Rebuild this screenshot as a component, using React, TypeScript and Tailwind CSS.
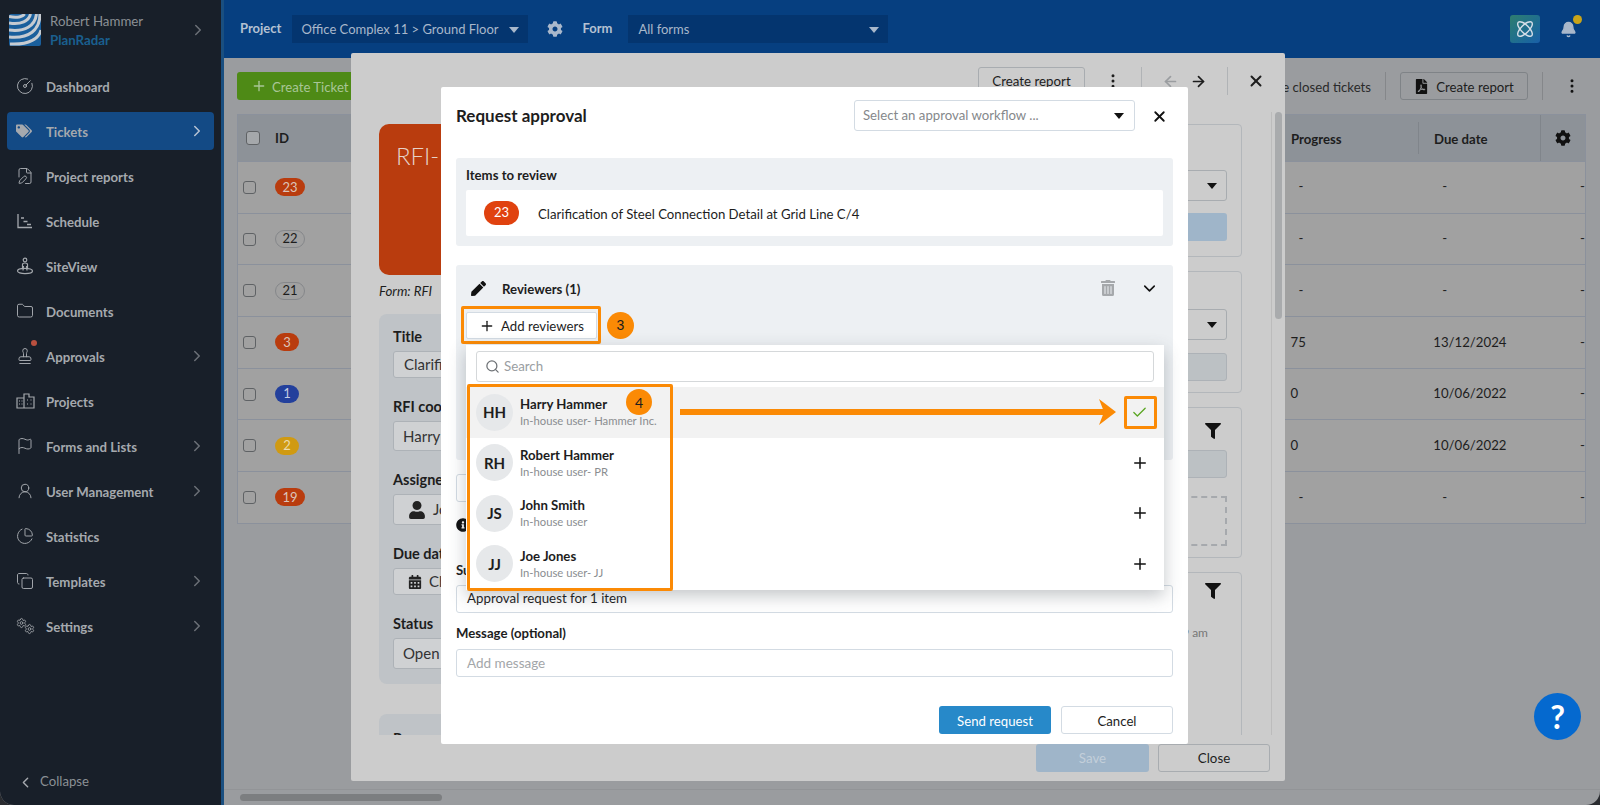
import { ArrowLeft, ArrowRight, Bell, ChartPie, Check, ChevronDown, ChevronLeft, ChevronRight, CircleGauge, Copy, EllipsisVertical, FilePen, Flag, Folder, Plus, Search, Settings, Stamp, UserRound, X } from "lucide-react";
import { FaCalendarAlt, FaCog, FaFilePdf, FaFilter, FaInfoCircle, FaPen, FaTags, FaTrashAlt, FaUser } from "react-icons/fa";

const ScheduleIcon = () => (
  <svg width="18" height="18" viewBox="0 0 18 18" fill="none" stroke="currentColor" strokeWidth="1.3">
    <path d="M2 2v13.5h14" />
    <path d="M5 6h3M7.5 9.5h4M11 12.5h4" />
  </svg>
);

const SiteViewIcon = () => (
  <svg width="18" height="18" viewBox="0 0 18 18" fill="none" stroke="currentColor" strokeWidth="1.2">
    <circle cx="9" cy="3" r="1.8" />
    <path d="M6.5 11V7.5c0-1 1-1.5 2.5-1.5s2.5.5 2.5 1.5V11M7.5 9l-.5 4.5M10.5 9l.5 4.5" />
    <ellipse cx="9" cy="14" rx="7.5" ry="2.6" />
  </svg>
);

const ProjectsIcon = () => (
  <svg width="19" height="18" viewBox="0 0 19 18" fill="none" stroke="currentColor" strokeWidth="1.2">
    <path d="M1 16V6h7v10zM8 16V2h5v3h5v11z" />
    <path d="M3 9h1M5.5 9h1M3 12h1M5.5 12h1M11 8h1M14.5 8h1M11 12h1M14.5 12h1" />
  </svg>
);

const SettingsIcon = () => (
  <span className="flex h-[18px] w-[19px] items-start">
    <Settings size={12} strokeWidth={1.8} />
    <Settings size={12} strokeWidth={1.8} className="mt-[6px] -ml-[3px]" />
  </span>
);

const navItems = [
  { label: "Dashboard", icon: <CircleGauge size={18} strokeWidth={1.3} /> },
  { label: "Tickets", icon: <FaTags size={16} />, active: true, arrow: true },
  { label: "Project reports", icon: <FilePen size={18} strokeWidth={1.3} /> },
  { label: "Schedule", icon: <ScheduleIcon /> },
  { label: "SiteView", icon: <SiteViewIcon /> },
  { label: "Documents", icon: <Folder size={18} strokeWidth={1.3} /> },
  { label: "Approvals", icon: <Stamp size={18} strokeWidth={1.3} />, arrow: true, dot: true },
  { label: "Projects", icon: <ProjectsIcon /> },
  { label: "Forms and Lists", icon: <Flag size={18} strokeWidth={1.3} />, arrow: true },
  { label: "User Management", icon: <UserRound size={18} strokeWidth={1.3} />, arrow: true },
  { label: "Statistics", icon: <ChartPie size={18} strokeWidth={1.3} /> },
  { label: "Templates", icon: <Copy size={18} strokeWidth={1.3} />, arrow: true },
  { label: "Settings", icon: <SettingsIcon />, arrow: true },
];

const rows = [
  { id: "23", badge: "bg-[#b93c0e] text-[#dcc4ba] w-[30px]", progress: "-", due: "-" },
  { id: "22", badge: "border border-[#85878a] text-[#1d1d1d] w-[30px]", progress: "-", due: "-" },
  { id: "21", badge: "border border-[#85878a] text-[#1d1d1d] w-[30px]", progress: "-", due: "-" },
  { id: "3", badge: "bg-[#b93c0e] text-[#dcc4ba] w-[24px]", progress: "75", due: "13/12/2024" },
  { id: "1", badge: "bg-[#23409c] text-[#c3cbe2] w-[24px]", progress: "0", due: "10/06/2022" },
  { id: "2", badge: "bg-[#d09a12] text-[#ecdcae] w-[24px]", progress: "0", due: "10/06/2022" },
  { id: "19", badge: "bg-[#b93c0e] text-[#dcc4ba] w-[30px]", progress: "-", due: "-" },
];

const reviewers = [
  { initials: "HH", name: "Harry Hammer", sub: "In-house user- Hammer Inc.", selected: true },
  { initials: "RH", name: "Robert Hammer", sub: "In-house user- PR" },
  { initials: "JS", name: "John Smith", sub: "In-house user" },
  { initials: "JJ", name: "Joe Jones", sub: "In-house user- JJ" },
];

const Caret = ({ className }: { className: string }) => (
  <span className={`h-0 w-0 border-x-[5px] border-t-[6px] border-x-transparent ${className}`} />
);

const Sidebar = () => (
  <aside className="flex h-full w-[224px] shrink-0 flex-col border-r-[3px] border-[#1a4f80] bg-[#181f29]">
    <div className="flex h-[59px] items-center pl-[9px] pr-[14px]">
      <svg width="32" height="32" viewBox="0 0 32 32" className="shrink-0">
        <rect width="32" height="32" rx="2" fill="#1a5f9c" />
        <g fill="none" stroke="#c6cbd1" strokeWidth="3">
          <path d="M0 2.5c8 2 14 0 15.5-2.5" />
          <path d="M0 9c12 2 20-2 21.5-9" />
          <path d="M0 16c16 2 26-4 27.5-16" />
          <path d="M0 23c20 2 31-7 31-23" />
          <path d="M1 30c20 1 29-6 31-14" />
        </g>
      </svg>
      <div className="ml-[9px] flex-1 pt-[2px] text-[13.3px] leading-[19px]">
        <div className="text-[#8b9095]">Robert Hammer</div>
        <div className="font-bold text-[#1a5f8f]">PlanRadar</div>
      </div>
      <ChevronRight size={18} className="text-[#6b7077]" />
    </div>
    <nav className="mt-[8px] flex flex-col gap-[7px] px-[7px]">
      {navItems.map((item) => (
        <div
          key={item.label}
          className={`flex h-[38px] items-center rounded-[4px] pl-[9px] pr-[8px] text-[13.2px] font-bold text-[#a5a9ae] ${item.active ? "bg-[#134a85]" : ""}`}
        >
          <span className="relative flex w-[30px] shrink-0 justify-start text-[#a5a9ae]">
            {item.icon}
            {item.dot && <span className="absolute left-[15px] -top-[7px] h-[6px] w-[6px] rounded-full bg-[#b9503f]" />}
          </span>
          <span className="flex-1 pt-[3px]">{item.label}</span>
          {item.arrow && <ChevronRight size={18} className={item.active ? "text-[#b8c4d4]" : "text-[#6b7077]"} />}
        </div>
      ))}
    </nav>
    <div className="mt-auto mb-[13px] flex items-center gap-[6px] pl-[17px] text-[13.2px] text-[#8b9095]">
      <ChevronLeft size={17} className="text-[#a5a9ae]" />
      Collapse
    </div>
  </aside>
);

const TopBar = () => (
  <header className="flex h-[58px] shrink-0 items-center bg-[#063f80] pl-[16px] pr-[23px] text-[13px] text-[#a9b8cb]">
    <span className="font-bold text-[#b4c1d2]">Project</span>
    <div className="ml-[11px] flex h-[28px] w-[236px] items-center justify-between bg-[#04356f] pl-[9px] pr-[9px] pt-[2px]">
      Office Complex 11 &gt; Ground Floor
      <Caret className="border-t-[#a9b8cb]" />
    </div>
    <FaCog size={16} className="ml-[19px] text-[#a9b8cb]" />
    <span className="ml-[19px] font-bold text-[#b4c1d2]">Form</span>
    <div className="ml-[16px] flex h-[28px] w-[260px] items-center justify-between bg-[#04356f] pl-[10px] pr-[9px] pt-[2px]">
      All forms
      <Caret className="border-t-[#a9b8cb]" />
    </div>
    <div className="ml-auto flex h-[28px] w-[30px] items-center justify-center rounded-[3px] bg-gradient-to-br from-[#2f7d6e] to-[#1a5fa8]">
      <svg width="20" height="20" viewBox="0 0 20 20" fill="none" stroke="#d5dee8" strokeWidth="1.4">
        <ellipse cx="10" cy="10" rx="4" ry="9.5" transform="rotate(45 10 10)" />
        <ellipse cx="10" cy="10" rx="4" ry="9.5" transform="rotate(-45 10 10)" />
      </svg>
    </div>
    <div className="relative ml-[20px]">
      <Bell size={17} fill="#a9b8cb" className="text-[#a9b8cb]" />
      <span className="absolute -right-[5px] -top-[6px] h-[9px] w-[9px] rounded-full bg-[#c9a419]" />
    </div>
  </header>
);

const TicketTable = () => (
  <div className="mt-[14px] w-[1349px] border border-[#8b919c] text-[13.2px] text-[#1d1d1d]">
    <div className="flex h-[46px] items-center bg-[#8d9298] font-bold">
      <span className="ml-[8px] h-[14px] w-[14px] rounded-[3px] border border-[#5f6265] bg-[#a5a8ab]" />
      <span className="ml-[15px] w-[1016px] pt-[2px]">ID</span>
      <span className="w-[128px] border-r border-[#80858b] pt-[2px] leading-[30px]">Progress</span>
      <span className="w-[122px] border-r border-[#80858b] pl-[15px] pt-[2px] leading-[44px]">Due date</span>
      <FaCog size={16} className="ml-[14px] text-[#111]" />
    </div>
    {rows.map((row) => (
      <div key={row.id} className="flex h-[51.7px] items-center border-t border-[#8b919c] bg-[#a1a1a1]">
        <span className="ml-[5px] h-[13px] w-[13px] rounded-[3px] border border-[#5f6265]" />
        <span className="ml-[19px] w-[1017px]">
          <span className={`flex h-[18px] items-center justify-center rounded-full text-[13px] ${row.badge}`}>{row.id}</span>
        </span>
        <span className={`w-[143px] ${row.progress === "-" ? "pl-[8px]" : ""}`}>{row.progress}</span>
        <span className={`w-[147px] ${row.due === "-" ? "pl-[9px]" : ""}`}>{row.due}</span>
        <span>-</span>
      </div>
    ))}
  </div>
);

const Field = ({ label, value, icon, box }: { label: string; value: string; icon?: React.ReactNode; box: string }) => (
  <div className="mb-[20px]">
    <div className="mb-[5px] text-[14.5px] font-bold leading-[18px] text-[#1d1d1d]">{label}</div>
    <div className={`flex items-center gap-[7px] rounded-[3px] border border-[#adb2b7] bg-[#cfd1d3] text-[15px] text-[#333] ${box}`}>
      {icon}
      {value}
    </div>
  </div>
);

const TicketModal = () => (
  <div className="absolute left-[351px] top-[53px] flex h-[728px] w-[934px] flex-col rounded-[2px] bg-[#cccccc] text-[13.3px] text-[#1d1d1d]">
    <div className="flex h-[59px] shrink-0 items-start justify-end pt-[14px] pr-[20px]">
      <div className="flex h-[28px] w-[107px] items-center justify-center rounded-[3px] border border-[#a8acb0] pt-[2px]">Create report</div>
      <EllipsisVertical size={18} className="ml-[19px] mt-[5px]" />
      <span className="ml-[19px] h-[28px] border-l border-[#b0b3b6]" />
      <ArrowLeft size={17} strokeWidth={2.4} className="ml-[20px] mt-[6px] text-[#9a9da0]" />
      <ArrowRight size={17} strokeWidth={2.4} className="ml-[11px] mt-[6px]" />
      <span className="ml-[20px] h-[28px] border-l border-[#b0b3b6]" />
      <X size={18} strokeWidth={2.6} className="ml-[19px] mt-[5px]" />
    </div>
    <div className="flex min-h-0 flex-1 overflow-hidden">
      <div className="flex-1 pl-[28px] pt-[12px] pr-[20px]">
        <div className="h-[151px] rounded-[10px] bg-[#b93c0e] pl-[17px] pt-[14px] text-[24px] font-light leading-[36px] text-[#e6d2c8]">RFI-19</div>
        <div className="mt-[7px] text-[13.3px] italic leading-[18px]">Form: RFI</div>
        <div className="mt-[14px] h-[370px] rounded-[8px] bg-[#bfc3c7] pl-[14px] pt-[14px] pr-[14px]">
          <Field label="Title" value="Clarification of Steel" box="h-[27px] pl-[10px]" />
          <Field label="RFI coordinator" value="Harry Hammer" box="h-[30px] pl-[9px]" />
          <Field label="Assigned to" value="John Smith" box="h-[31px] pl-[14px]" icon={<FaUser size={18} className="text-[#222]" />} />
          <Field label="Due date" value="Choose date" box="h-[27px] pl-[14px]" icon={<FaCalendarAlt size={14} className="text-[#222]" />} />
          <Field label="Status" value="Open" box="h-[31px] pl-[9px]" />
        </div>
        <div className="mt-[30px] h-[60px] rounded-[8px] bg-[#bfc3c7] pl-[14px] pt-[14px] text-[14.5px] font-bold">Request</div>
      </div>
      <div className="flex w-[392px] shrink-0 flex-col gap-[14px] pt-[12px]">
        <div className="h-[133px] shrink-0 rounded-[4px] border border-[#b3b7bb] px-[14px] pt-[45px]">
          <div className="flex h-[31px] items-center justify-end rounded-[3px] border border-[#a8acb0] pr-[9px]"><Caret className="border-t-[#111]" /></div>
          <div className="mt-[12px] h-[28px] rounded-[3px] bg-[#9fb5c9]" />
        </div>
        <div className="h-[122px] shrink-0 rounded-[4px] border border-[#b3b7bb] px-[14px] pt-[37px]">
          <div className="flex h-[31px] items-center justify-end rounded-[3px] border border-[#a8acb0] pr-[9px]"><Caret className="border-t-[#111]" /></div>
          <div className="mt-[13px] h-[28px] rounded-[3px] border border-[#adb2b7] bg-[#bcc1c4]" />
        </div>
        <div className="h-[151px] shrink-0 rounded-[4px] border border-[#b3b7bb] px-[14px] pt-[15px]">
          <div className="flex justify-end pr-[6px]"><FaFilter size={16} className="text-[#111]" /></div>
          <div className="mt-[11px] h-[28px] rounded-[3px] border border-[#adb2b7] bg-[#bcc1c4]" />
          <div className="mt-[18px] h-[50px] border-2 border-dashed border-[#a6a9ad]" />
        </div>
        <div className="h-[180px] shrink-0 rounded-[4px] border border-[#b3b7bb] px-[14px] pt-[10px]">
          <div className="flex justify-end pr-[6px]"><FaFilter size={16} className="text-[#111]" /></div>
          <div className="mt-[25px] pr-[19px] text-right text-[12px] text-[#777]">9 am</div>
        </div>
      </div>
      <div className="w-[29px] shrink-0" />
      <div className="w-[14px] shrink-0 border-l border-[#bcbcbc] pl-[3px]">
        <div className="h-[207px] w-[7px] rounded-full bg-[#a9abad]" />
      </div>
    </div>
    <div className="flex h-[46px] shrink-0 items-start justify-end gap-[9px] pt-[9px] pr-[15px]">
      <div className="flex h-[28px] w-[113px] items-center justify-center rounded-[3px] bg-[#9fb5c9] pt-[2px] text-[#c3cfda]">Save</div>
      <div className="flex h-[28px] w-[112px] items-center justify-center rounded-[3px] border border-[#a8acb0] pt-[2px]">Close</div>
    </div>
  </div>
);

const ReviewerDropdown = () => (
  <div className="absolute left-[10px] top-[80px] h-[245px] w-[698px] bg-white shadow-[0_6px_16px_rgba(60,70,80,0.3)]">
    <div className="mx-[10px] mt-[6px] flex h-[31px] items-center gap-[4px] rounded-[3px] border border-[#d5d8da] pl-[8px] text-[13.3px] text-[#9a9ea2]">
      <Search size={15} className="text-[#6d7175]" />
      Search
    </div>
    <div className="mt-[5px]">
      {reviewers.map((r) => (
        <div key={r.initials} className={`flex h-[50.5px] items-center pl-[10px] pr-[15px] ${r.selected ? "bg-[#f2f2f2]" : ""}`}>
          <span className="flex h-[37px] w-[37px] items-center justify-center rounded-full bg-[#e6e8ea] text-[15px] font-bold text-[#1d1d1d]">{r.initials}</span>
          <div className="ml-[7px] flex-1">
            <div className="text-[13.2px] font-bold leading-[18px] text-[#1d1d1d]">{r.name}</div>
            <div className="text-[11.25px] leading-[16px] text-[#8a8d90]">{r.sub}</div>
          </div>
          {r.selected ? (
            <Check size={17} strokeWidth={1.8} className="mr-[1px] text-[#5aa622]" />
          ) : (
            <Plus size={18} strokeWidth={2} className="text-[#111]" />
          )}
        </div>
      ))}
    </div>
    {/* tutorial annotations */}
    <div className="absolute left-[1px] top-[39px] h-[207px] w-[206px] rounded-[2px] border-[3px] border-[#fb8a05]" />
    <span className="absolute left-[160px] top-[44px] flex h-[26px] w-[26px] items-center justify-center rounded-full bg-[#fb8a05] text-[14px] text-[#1d1d1d]">4</span>
    <svg width="436" height="26" viewBox="0 0 436 26" className="absolute left-[214px] top-[54px]" fill="#fb8a05">
      <rect y="10" width="428" height="6" />
      <polygon points="419,0 436,13 419,26 424,13" />
    </svg>
    <div className="absolute left-[658px] top-[51px] h-[33px] w-[33px] rounded-[2px] border-[3px] border-[#fb8a05]" />
  </div>
);

const RequestModal = () => (
  <div className="absolute left-[441px] top-[87px] h-[657px] w-[747px] rounded-[2px] bg-white px-[15px] text-[13.2px] text-[#1d1d1d]">
    <div className="flex h-[58px] items-center">
      <h2 className="text-[17px] font-bold">Request approval</h2>
      <div className="ml-auto -mt-[1px] flex h-[31px] w-[281px] items-center justify-between rounded-[3px] border border-[#d3dbe3] pl-[8px] pr-[10px] text-[#85888b]">
        Select an approval workflow ...
        <Caret className="border-t-[#111]" />
      </div>
      <X size={17} strokeWidth={2.6} className="ml-[16px] mr-[5px] text-[#111]" />
    </div>
    <div className="mt-[13px] h-[88px] rounded-[3px] bg-[#edf0f3] px-[10px] pt-[8px]">
      <div className="font-bold leading-[18px]">Items to review</div>
      <div className="mt-[6px] flex h-[46px] items-center rounded-[2px] bg-white pl-[18px]">
        <span className="flex h-[24px] w-[35px] items-center justify-center rounded-full bg-[#e0420f] text-[13px] text-white">23</span>
        <span className="ml-[19px] pt-[3px]">Clarification of Steel Connection Detail at Grid Line C/4</span>
      </div>
    </div>
    <div className="relative mt-[19px] h-[195px] rounded-[3px] bg-[#edf0f3]">
      <div className="flex h-[46px] items-center pl-[15px] pr-[14px]">
        <FaPen size={15} className="text-[#111]" />
        <span className="ml-[16px] pt-[3px] font-bold">Reviewers (1)</span>
        <FaTrashAlt size={16} className="ml-auto text-[#a5a8ab]" />
        <ChevronDown size={19} strokeWidth={2} className="ml-[24px] text-[#111]" />
      </div>
      <div className="ml-[10px] mt-[1px] flex h-[27px] w-[131px] items-center justify-center gap-[6px] rounded-[2px] border border-[#d3dbe3] bg-white">
        <Plus size={16} strokeWidth={2} />
        <span className="pt-[2px]">Add reviewers</span>
      </div>
      <div className="absolute left-[5px] top-[41px] h-[38px] w-[140px] rounded-[2px] border-[3px] border-[#fb8a05]" />
      <span className="absolute left-[151px] top-[47px] flex h-[27px] w-[27px] items-center justify-center rounded-full bg-[#fb8a05] font-['Liberation_Sans',sans-serif] text-[14px] text-[#1d1d1d]">3</span>
      <ReviewerDropdown />
    </div>
    <div className="mt-[14px] h-[28px] w-[120px] rounded-[3px] border border-[#d3dbe3]" />
    <FaInfoCircle size={14} className="mt-[16px] text-[#111]" />
    <div className="mt-[29px] font-bold leading-[18px]">Subject</div>
    <div className="mt-[6px] flex h-[28px] items-center rounded-[3px] border border-[#d3dbe3] pl-[10px] text-[13.3px]">Approval request for 1 item</div>
    <div className="mt-[11px] font-bold leading-[18px]">Message (optional)</div>
    <div className="mt-[7px] flex h-[28px] items-center rounded-[3px] border border-[#d3dbe3] pl-[10px] text-[13.5px] text-[#a3a6a9]">Add message</div>
    <div className="mt-[29px] flex justify-end gap-[10px]">
      <div className="flex h-[28px] w-[112px] items-center justify-center rounded-[3px] bg-[#2789c9] pt-[3px] text-white">Send request</div>
      <div className="flex h-[28px] w-[112px] items-center justify-center rounded-[3px] border border-[#d3dbe3] pt-[3px]">Cancel</div>
    </div>
  </div>
);

export default function App() {
  return (
    <div className="h-[805px] w-[1600px] bg-[#2a2c30]">
      <div className="relative flex h-[805px] w-[1600px] overflow-hidden rounded-b-[14px] bg-[#9a9c9f] font-['Lato',sans-serif]">
        <Sidebar />
        <div className="flex min-w-0 flex-1 flex-col">
          <TopBar />
          <main className="flex-1 pl-[13px] pt-[14px]">
            <div className="flex h-[28px] items-center text-[13.2px] text-[#1d1d1d]">
              <div className="flex h-[28px] w-[150px] items-center gap-[5px] rounded-[3px] bg-[#4e8a16] pl-[14px] text-[#a9c697]">
                <Plus size={16} />
                <span className="pt-[3px]">Create Ticket</span>
              </div>
              <span className="ml-auto pt-[3px] text-[#2a2a2a]">Include closed tickets</span>
              <span className="ml-[14px] h-[28px] border-l border-[#85878a]" />
              <div className="ml-[14px] flex h-[28px] w-[128px] items-center justify-center gap-[7px] rounded-[3px] border border-[#7f8387]">
                <FaFilePdf size={15} className="text-[#111]" />
                <span className="pt-[3px]">Create report</span>
              </div>
              <span className="ml-[14px] h-[28px] border-l border-[#85878a]" />
              <EllipsisVertical size={18} className="ml-[20px] mr-[19px] text-[#111]" />
            </div>
            <TicketTable />
          </main>
          <div className="border-t border-[#929497] pl-[16px] pb-[4px] pt-[4px]">
            <div className="h-[7px] w-[202px] rounded-full bg-[#7c7e80]" />
          </div>
        </div>
        <TicketModal />
        <RequestModal />
        <button className="absolute left-[1534px] top-[693px] flex h-[47px] w-[47px] items-center justify-center rounded-full bg-[#0569cf] text-[32px] font-bold text-white">?</button>
      </div>
    </div>
  );
}
